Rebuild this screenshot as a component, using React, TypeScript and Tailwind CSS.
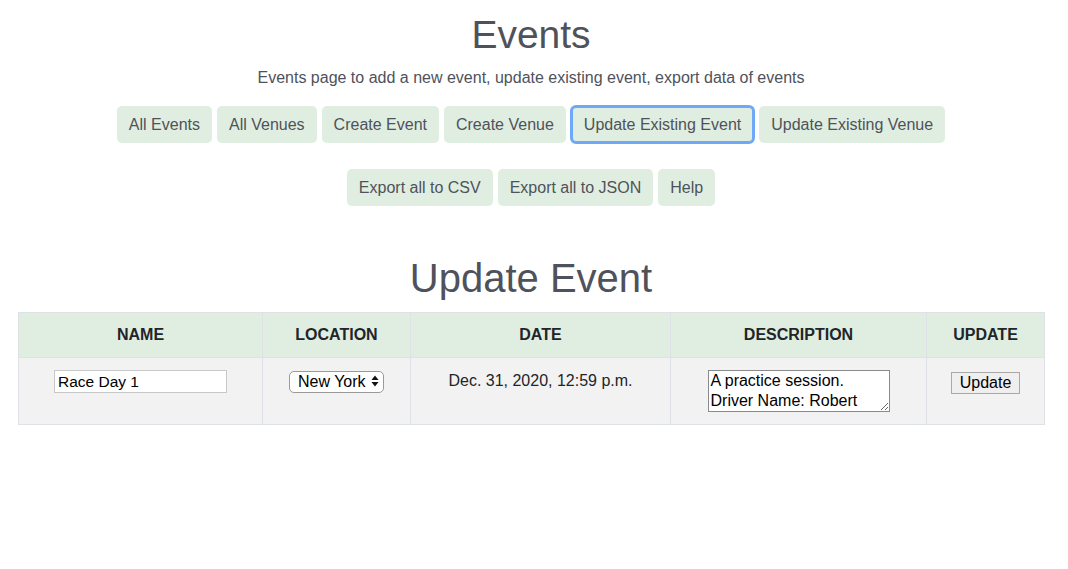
import { useState } from 'react'

const navRow1 = ['All Events', 'All Venues', 'Create Event', 'Create Venue', 'Update Existing Event', 'Update Existing Venue']
const navRow2 = ['Export all to CSV', 'Export all to JSON', 'Help']

function NavButton({ label, active }: { label: string; active?: boolean }) {
  return (
    <button
      className={`h-[37px] rounded-[5px] bg-[#dfeee0] px-3 text-[16px] text-[#4f525b] ${
        active ? 'outline-[3px] outline-solid outline-[#6ea8f7] -outline-offset-[2px] border border-[#c9d7ca]' : ''
      }`}
    >
      {label}
    </button>
  )
}

export default function App() {
  const [name, setName] = useState('Race Day 1')
  const [desc, setDesc] = useState('A practice session.\nDriver Name: Robert')

  return (
    <div className="min-h-[569px] w-[1062px] bg-white text-center font-['Liberation_Sans',Arial,sans-serif] text-[#4f525b]">
      <h1 className="pt-[11px] text-[39px] leading-[48px]">Events</h1>
      <p className="mt-[7px] text-[16px] leading-[24px]">
        Events page to add a new event, update existing event, export data of events
      </p>

      <div className="mt-4 flex justify-center gap-[5px]">
        {navRow1.map((l) => (
          <NavButton key={l} label={l} active={l === 'Update Existing Event'} />
        ))}
      </div>
      <div className="mt-[26px] flex justify-center gap-[5px]">
        {navRow2.map((l) => (
          <NavButton key={l} label={l} />
        ))}
      </div>

      <h2 className="mt-[48px] text-[40px] leading-[48px]">Update Event</h2>

      <div className="mt-[10px] px-[18px]">
        <table className="w-[1026px] table-fixed border-collapse border border-[#dee2e6] text-[16px] text-[#212529]">
          <colgroup>
            <col className="w-[244px]" />
            <col className="w-[148px]" />
            <col className="w-[260px]" />
            <col className="w-[256px]" />
            <col className="w-[118px]" />
          </colgroup>
          <thead>
            <tr className="h-[45px] bg-[#dfeee0]">
              {['NAME', 'LOCATION', 'DATE', 'DESCRIPTION', 'UPDATE'].map((h) => (
                <th key={h} className="border border-[#dee2e6] font-bold">
                  {h}
                </th>
              ))}
            </tr>
          </thead>
          <tbody>
            <tr className="h-[67px] bg-[#f2f2f2] align-top">
              <td className="border border-[#dee2e6] pt-[12px]">
                <input
                  value={name}
                  onChange={(e) => setName(e.target.value)}
                  className="h-[23px] w-[173px] border border-[#c8c8c8] bg-white px-[3px] text-[15.5px] text-black"
                />
              </td>
              <td className="border border-[#dee2e6] pt-[12px]">
                <div className="relative mx-auto h-[22px] w-[95px]">
                  <select className="h-[22px] w-[95px] appearance-none rounded-[5px] border border-[#9a9a9a] bg-white pl-[8px] text-left text-[16px] leading-[20px] text-black">
                    <option>New York</option>
                  </select>
                  <svg
                    className="pointer-events-none absolute right-[5px] top-[5px]"
                    width="8"
                    height="12"
                    viewBox="0 0 8 12"
                  >
                    <path d="M4 0.5 L7.5 5 H0.5 Z" fill="#111" />
                    <path d="M4 11.5 L7.5 7 H0.5 Z" fill="#111" />
                  </svg>
                </div>
              </td>
              <td className="border border-[#dee2e6] pt-[12px] leading-[22px]">Dec. 31, 2020, 12:59 p.m.</td>
              <td className="border border-[#dee2e6] pt-[12px]">
                <textarea
                  value={desc}
                  onChange={(e) => setDesc(e.target.value)}
                  className="block mx-auto h-[42px] w-[182px] resize border border-[#8a8a8a] bg-white px-[2px] text-left text-[16px] leading-[20px] text-black"
                />
              </td>
              <td className="border border-[#dee2e6] pt-[13px]">
                <button className="h-[22px] w-[69px] border border-[#a9a9a9] bg-[#efefef] text-[16px] leading-[18px] text-black">
                  Update
                </button>
              </td>
            </tr>
          </tbody>
        </table>
      </div>
    </div>
  )
}
